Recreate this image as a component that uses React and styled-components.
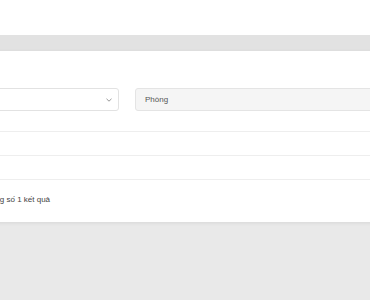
import React from "react";
import styled, { createGlobalStyle } from "styled-components";

const Global = createGlobalStyle`
  html, body { margin: 0; padding: 0; background: #e9e9e9; overflow: hidden; }
  body { font-family: "Liberation Sans", Arial, sans-serif; }
  * { box-sizing: border-box; }
`;

const Page = styled.div`
  width: 370px;
  height: 300px;
  display: flex;
  flex-direction: column;
  overflow: hidden;
`;

const Header = styled.header`
  height: 35px;
  background: #ffffff;
  flex: none;
`;

const Main = styled.main`
  flex: 1;
  padding-top: 16px;
  background: linear-gradient(#e2e2e2 0, #e2e2e2 16px, #e9e9e9 16px);
`;

const Card = styled.section`
  background: #ffffff;
  margin: 0 -30px 0 -30px;
  padding: 37px 16px 0 16px;
  box-shadow: 0 1px 4px rgba(0, 0, 0, 0.08);
`;

const Filters = styled.div`
  display: flex;
  gap: 16px;
`;

const Select = styled.div`
  height: 23px;
  border: 1px solid ${(p) => (p.$disabled ? "#e4e4e4" : "#e2e2e2")};
  background: ${(p) => (p.$disabled ? "#f5f5f5" : "#ffffff")};
  border-radius: 3px;
  display: flex;
  align-items: center;
  justify-content: space-between;
  padding: 0 6px 0 9px;
  font-size: 8px;
  color: #555;
  flex: ${(p) => (p.$grow ? "1" : "0 0 133px")};
`;

const Table = styled.div`
  margin-top: 20px;
  border-top: 1px solid #eeeeee;
`;

const Row = styled.div`
  height: 24px;
  border-bottom: 1px solid #eeeeee;
`;

const Footer = styled.div`
  padding: 14px 0 16px;
  font-size: 8px;
  line-height: 12px;
  color: #444;
`;

const Chevron = () => (
  <svg width="6" height="4" viewBox="0 0 6 4">
    <path d="M0.5 0.8 L3 3.2 L5.5 0.8" fill="none" stroke="#8a8a8a" strokeWidth="0.9" />
  </svg>
);

export default function App() {
  return (
    <Page>
      <Global />
      <Header />
      <Main>
        <Card>
          <Filters>
            <Select>
              <span />
              <Chevron />
            </Select>
            <Select $disabled $grow>
              Phòng
            </Select>
          </Filters>
          <Table>
            <Row />
            <Row />
          </Table>
          <Footer>Tổng số 1 kết quả</Footer>
        </Card>
      </Main>
    </Page>
  );
}
